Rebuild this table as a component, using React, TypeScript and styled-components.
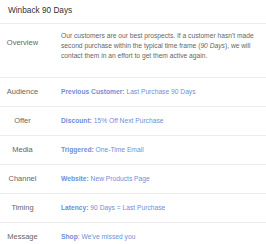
import React from "react";
import styled, { createGlobalStyle } from "styled-components";

const GlobalStyle = createGlobalStyle`
  html, body {
    margin: 0;
    padding: 0;
    background: #fff;
    font-family: "Liberation Sans", Arial, sans-serif;
  }
`;

const rows = [
  { label: "Audience", key: "Previous Customer:", text: " Last Purchase 90 Days" },
  { label: "Offer", key: "Discount:", text: " 15% Off Next Purchase" },
  { label: "Media", key: "Triggered:", text: " One-Time Email" },
  { label: "Channel", key: "Website:", text: " New Products Page" },
  { label: "Timing", key: "Latency:", text: " 90 Days = Last Purchase" },
  { label: "Message", key: "Shop", text: ": We've missed you" },
];

function App() {
  return (
    <Page>
      <GlobalStyle />
      <Title>Winback 90 Days</Title>
      <Row $tall>
        <Label $offset={7}>Overview</Label>
        <Body>
          Our customers are our best prospects. If a customer hasn't made
          second purchase within the typical time frame (<em>90 Days</em>), we
          will contact them in an effort to get them active again.
        </Body>
      </Row>
      {rows.map((r) => (
        <Row key={r.label}>
          <Label>{r.label}</Label>
          <Value>
            <strong>{r.key}</strong>
            {r.text}
          </Value>
        </Row>
      ))}
    </Page>
  );
}

const Page = styled.div`
  width: 266px;
  background: #fff;
`;

const Title = styled.h1`
  margin: 0;
  height: 23px;
  box-sizing: border-box;
  padding: 6px 8px 0;
  font-size: 8.25px;
  line-height: 10px;
  font-weight: normal;
  color: #333;
`;

const Row = styled.div<{ $tall?: boolean }>`
  display: grid;
  grid-template-columns: 45px 1fr;
  column-gap: 16px;
  align-items: ${(p) => (p.$tall ? "start" : "center")};
  border-top: 1px solid #ececec;
  height: ${(p) => (p.$tall ? "53px" : "28px")};
  padding: ${(p) => (p.$tall ? "7px 8px 0 0" : "0 8px 0 0")};
  box-sizing: content-box;
  ${(p) => p.$tall && "height: 46px;"}
`;

const Label = styled.div<{ $offset?: number }>`
  text-align: center;
  font-size: 7.5px;
  line-height: 10px;
  color: #666;
  margin-top: ${(p) => p.$offset ?? 0}px;
`;

const Body = styled.p`
  margin: 0;
  font-size: 6.7px;
  line-height: 10px;
  color: #666;
  em {
    font-style: italic;
  }
`;

const Value = styled.div`
  font-size: 6.7px;
  line-height: 10px;
  color: #6f8fd8;
  white-space: nowrap;
  strong {
    font-weight: bold;
  }
`;

export default App;
